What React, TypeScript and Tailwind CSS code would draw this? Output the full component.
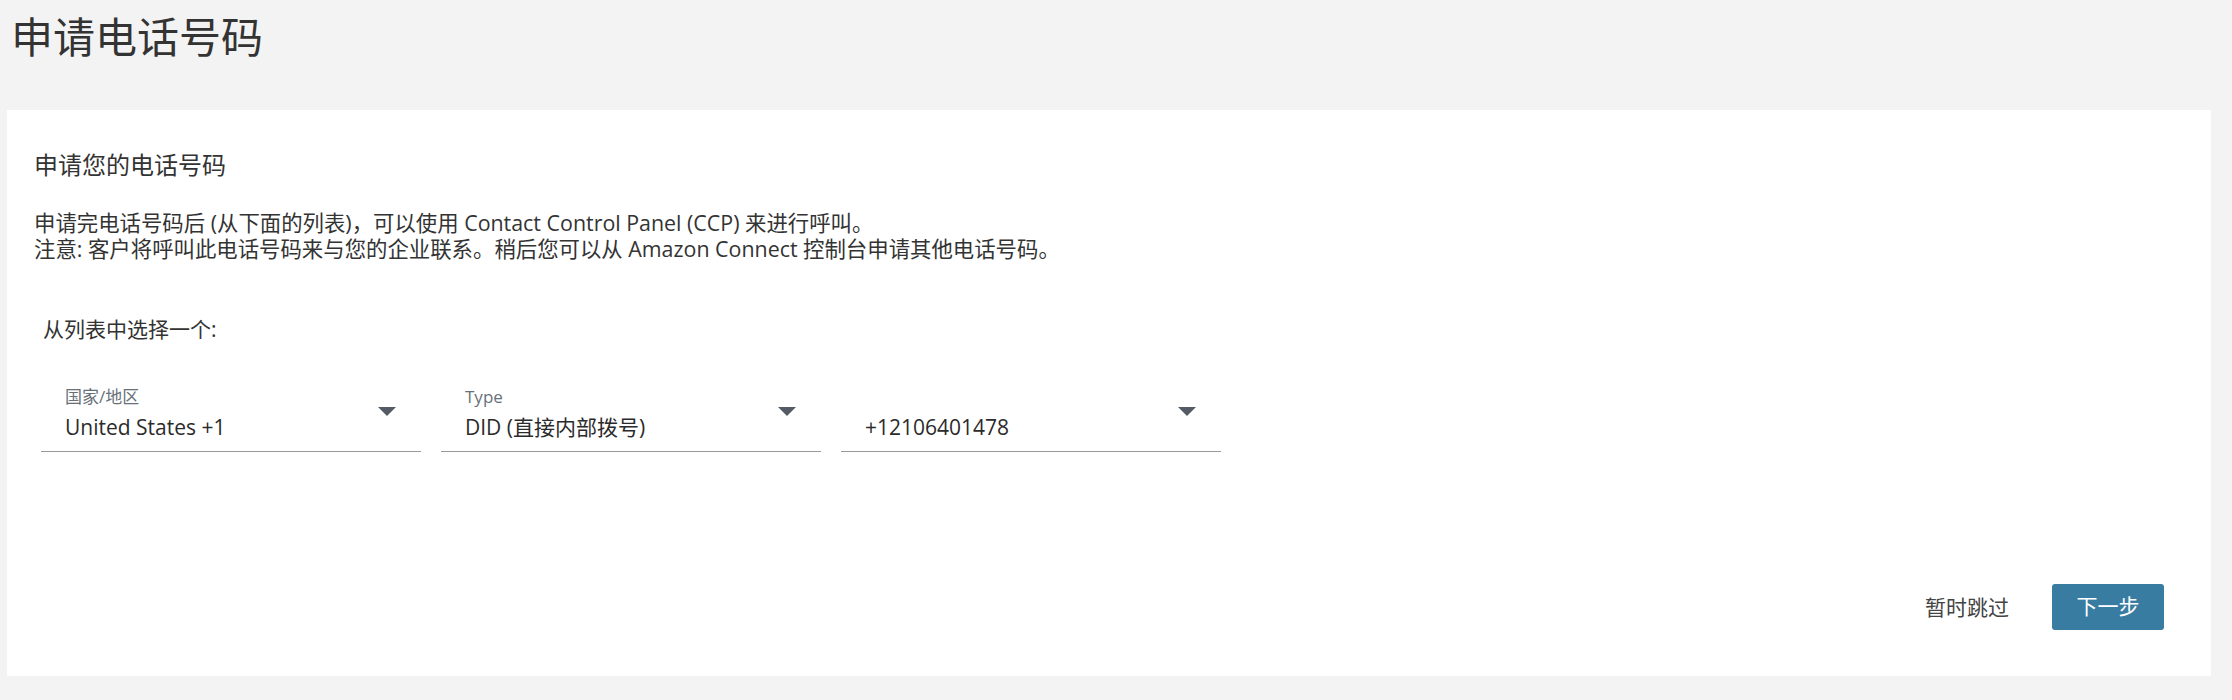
import React from 'react';

const font = { fontFamily: '"Open Sans", "Noto Sans CJK SC", sans-serif' };

interface SelectProps {
  label?: string;
  value: string;
}

const FieldSelect: React.FC<SelectProps> = ({ label, value }) => {
  return (
    <div className="relative w-[380px] border-b border-[#999999] pl-[24px] pb-[11px]">
      <div className="h-[20px] text-[17px] leading-[20px] text-[#687078]">{label}</div>
      <div className="mt-[7px] text-[21px] leading-[26px] text-[#2b2b2b]">{value}</div>
      {/* dropdown caret */}
      <svg
        className="absolute right-[25px] top-[20px]"
        width="18"
        height="9"
        viewBox="0 0 18 9"
      >
        <polygon points="0,0 18,0 9,9" fill="#545b64" />
      </svg>
    </div>
  );
};

export default function App() {
  return (
    <div className="min-h-screen bg-[#f3f3f3] pt-[14px]" style={font}>
      <h1 className="pl-[11px] text-[42px] leading-[46px] font-normal text-[#333333]">申请电话号码</h1>

      <div className="ml-[7px] mr-[21px] mt-[50px] flex flex-col bg-white px-[27px] pt-[40px] pb-[46px] text-[#333333]">
        <h2 className="text-[24px] leading-[30px]">申请您的电话号码</h2>

        <p className="mt-[30px] text-[21.4px] leading-[26px]">
          申请完电话号码后 (从下面的列表)，可以使用 Contact Control Panel (CCP) 来进行呼叫。
          <br />
          注意: 客户将呼叫此电话号码来与您的企业联系。稍后您可以从 Amazon Connect 控制台申请其他电话号码。
        </p>

        <p className="mt-[54px] pl-[9px] text-[21px] leading-[26px]">从列表中选择一个:</p>

        <div className="mt-[45px] ml-[7px] flex gap-[20px]">
          <FieldSelect label="国家/地区" value="United States +1" />
          <FieldSelect label="Type" value="DID (直接内部拨号)" />
          <FieldSelect value="+12106401478" />
        </div>

        <div className="mt-[132px] mr-[20px] flex items-center justify-end gap-[43px]">
          <button className="text-[21px] leading-[26px] text-[#444444]">暂时跳过</button>
          <button className="h-[46px] w-[112px] rounded-[3px] bg-[#397ca1] text-[21px] text-white">下一步</button>
        </div>
      </div>
    </div>
  );
}
